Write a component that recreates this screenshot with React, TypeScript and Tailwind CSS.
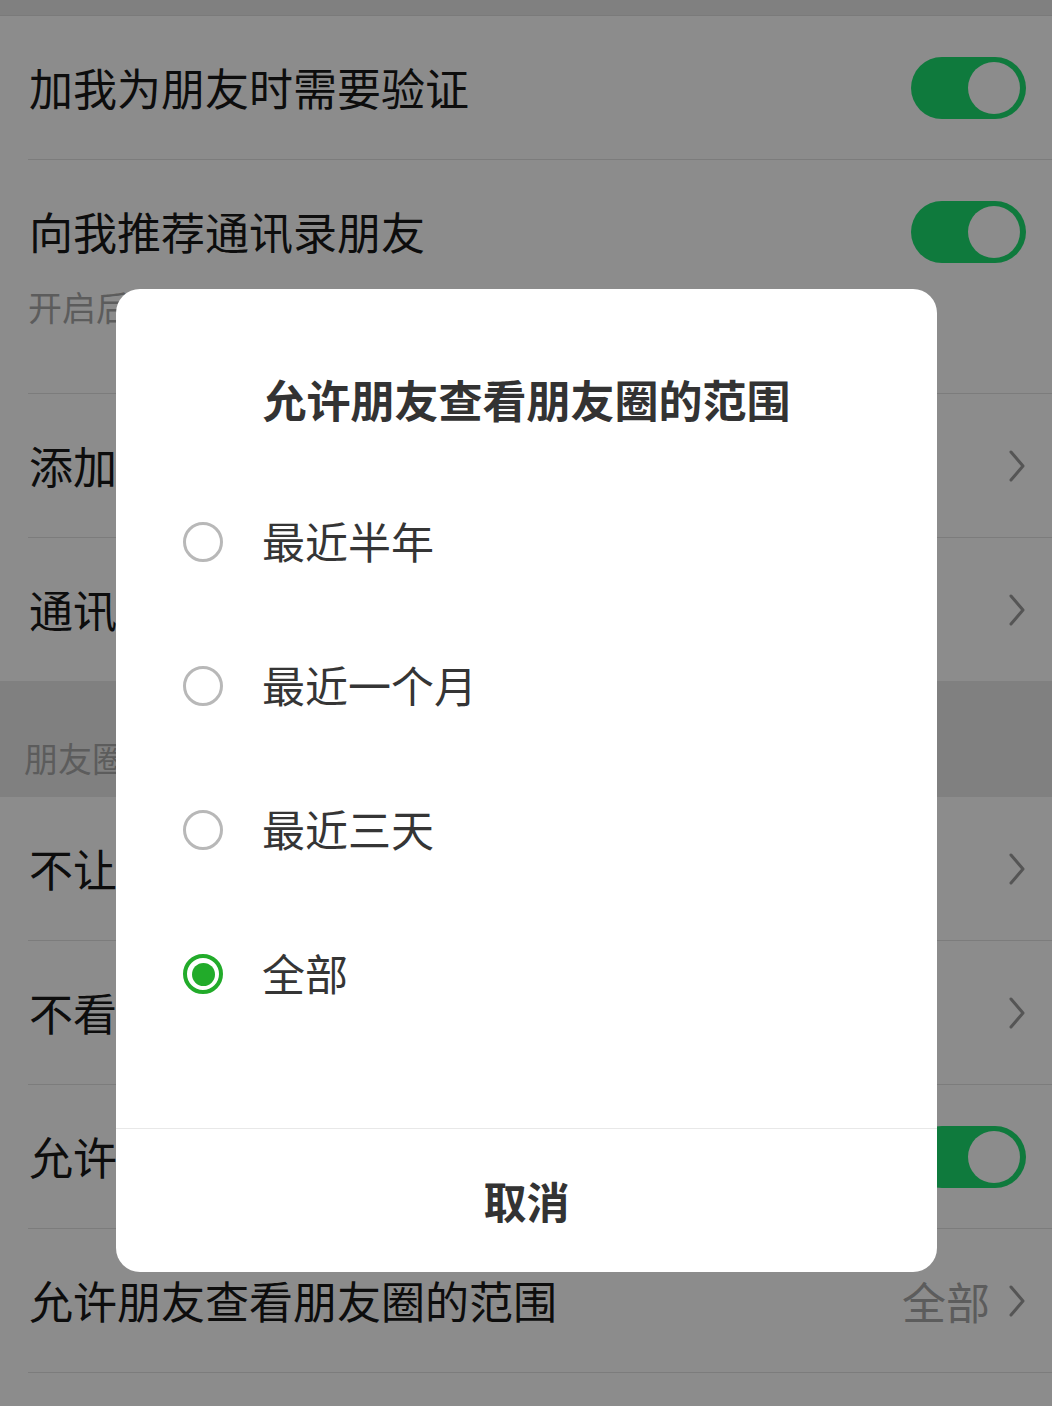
import React from 'react'

const font = { fontFamily: '"Noto Sans CJK SC", "Noto Sans", sans-serif' }

function Toggle() {
  return (
    <div className="w-[115px] h-[62px] rounded-full bg-[#0f7a3d] flex items-center justify-end pr-[6px]">
      <div className="w-[52px] h-[52px] rounded-full bg-[#8c8c8c]" />
    </div>
  )
}

function Chevron() {
  return (
    <svg width="18" height="34" viewBox="0 0 18 34" className="shrink-0">
      <polyline points="3,3 15,17 3,31" fill="none" stroke="#555555" strokeWidth="3" strokeLinecap="round" strokeLinejoin="round" />
    </svg>
  )
}

function Row({ label, right, sub, last }: { label: string; right?: React.ReactNode; sub?: string; last?: boolean }) {
  return (
    <div className="pl-[28px]">
      <div className={`pr-[26px] ${last ? '' : 'border-b border-[#7c7c7c]'} ${sub ? 'pb-[69px]' : ''}`}>
        <div className="h-[143px] flex items-center justify-between">
          <span className="text-[44px] leading-none text-[#0d0d0d] pl-[1px] -mt-[2px]">{label}</span>
          {right}
        </div>
        {sub && <div className="-mt-[13px] text-[34px] leading-none text-[#5c5c5c]">{sub}</div>}
      </div>
    </div>
  )
}

const options = ['最近半年', '最近一个月', '最近三天', '全部']

export default function App() {
  const selected = 3
  return (
    <div className="relative w-[1052px] h-[1406px] overflow-hidden bg-[#8c8c8c]" style={font}>
      <div className="h-[16px] bg-[#808080] border-b border-[#7a7a7a]" />

      <Row label="加我为朋友时需要验证" right={<Toggle />} />
      <Row label="向我推荐通讯录朋友" right={<Toggle />} sub="开启后，为你推荐已经开通微信的手机联系人" />
      <Row label="添加我的方式" right={<Chevron />} />
      <Row label="通讯录黑名单" right={<Chevron />} last />

      <div className="h-[116px] bg-[#808080] flex items-end pl-[24px] pb-[22px]">
        <span className="text-[34px] leading-none text-[#5c5c5c]">朋友圈</span>
      </div>

      <Row label="不让他（她）看" right={<Chevron />} />
      <Row label="不看他（她）" right={<Chevron />} />
      <Row label="允许陌生人查看十条朋友圈" right={<Toggle />} />
      <Row
        label="允许朋友查看朋友圈的范围"
        right={
          <div className="flex items-center gap-[18px]">
            <span className="text-[44px] leading-none text-[#5c5c5c]">全部</span>
            <Chevron />
          </div>
        }
      />

      {/* dialog */}
      <div className="absolute left-[116px] top-[289px] w-[821px] bg-white rounded-[24px] overflow-hidden">
        <div className="h-[181px] pt-[80px] text-center">
          <span className="text-[44px] leading-[60px] font-bold text-[#333333]">允许朋友查看朋友圈的范围</span>
        </div>
        <div>
          {options.map((o, i) => (
            <div key={o} className="h-[144px] flex items-center pl-[67px]">
              {i === selected ? (
                <div className="w-[40px] h-[40px] rounded-full border-[4px] border-[#22ab2a] flex items-center justify-center">
                  <div className="w-[23px] h-[23px] rounded-full bg-[#22ab2a]" />
                </div>
              ) : (
                <div className="w-[40px] h-[40px] rounded-full border-[3px] border-[#b8b8b8]" />
              )}
              <span className="ml-[39px] text-[43px] leading-none text-[#353535] -mt-[3px]">{o}</span>
            </div>
          ))}
        </div>
        <div className="h-[82px]" />
        <div className="h-[144px] border-t border-[#e8e8e8] flex items-center justify-center">
          <span className="text-[43px] leading-none font-bold text-[#333333]">取消</span>
        </div>
      </div>
    </div>
  )
}
